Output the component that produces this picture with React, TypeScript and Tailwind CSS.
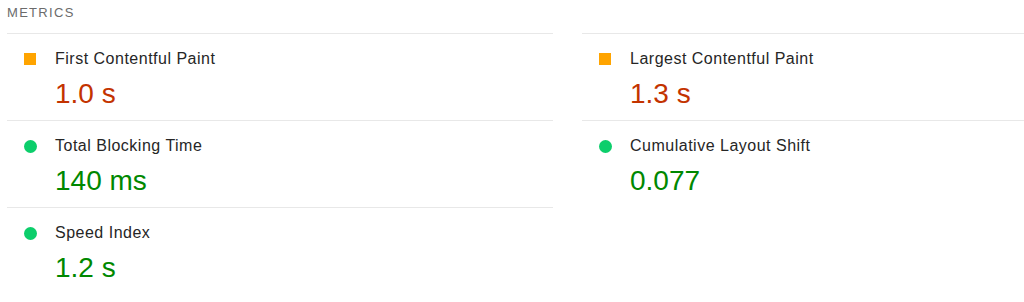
const metrics = [
  { label: "First Contentful Paint", value: "1.0 s", rating: "average" },
  { label: "Largest Contentful Paint", value: "1.3 s", rating: "average" },
  { label: "Total Blocking Time", value: "140 ms", rating: "pass" },
  { label: "Cumulative Layout Shift", value: "0.077", rating: "pass" },
  { label: "Speed Index", value: "1.2 s", rating: "pass" },
];

function Metric({ label, value, rating }: { label: string; value: string; rating: string }) {
  const pass = rating === "pass";
  return (
    <div className="border-t border-[#e8e8e8] pt-[15px] pb-[10px]">
      <div className="flex items-center h-[20px]">
        <div className="w-[48px] pl-[17px] flex items-center">
          {pass ? (
            <span className="block w-[13px] h-[13px] rounded-full bg-[#0cce6b]" />
          ) : (
            <span className="block w-[12px] h-[12px] bg-[#ffa400]" />
          )}
        </div>
        <span className="text-[16px] leading-[20px] tracking-[0.5px] text-[#262626]">{label}</span>
      </div>
      <div
        className={
          "mt-[9px] pl-[48px] text-[28px] leading-[32px] " +
          (pass ? "text-[#008800]" : "text-[#c33300]")
        }
      >
        {value}
      </div>
    </div>
  );
}

export default function App() {
  return (
    <div className="w-[1024px] h-[302px] overflow-hidden bg-white font-['Liberation_Sans',Arial,sans-serif]">
      <div className="pl-[7px]">
        <h2 className="pt-[5px] pb-[12px] text-[13px] leading-[16px] tracking-[1.3px] text-[#6b6b6b] uppercase">
          Metrics
        </h2>
        <div className="grid grid-cols-[546px_546px] gap-x-[29px]">
          {metrics.map((m) => (
            <Metric key={m.label} {...m} />
          ))}
        </div>
      </div>
    </div>
  );
}
